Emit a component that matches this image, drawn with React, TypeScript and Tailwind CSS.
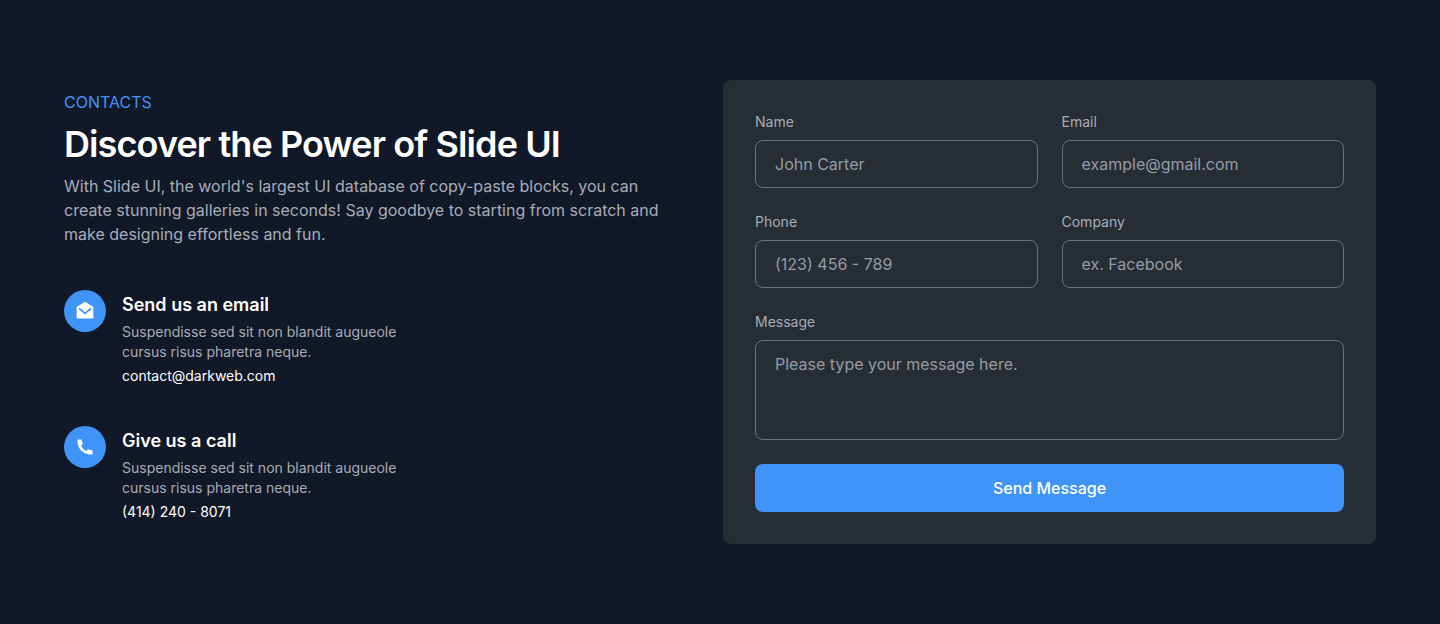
import type { ReactNode } from "react";

const fieldClass =
  "w-full rounded-lg border border-[#6b727a] bg-transparent px-[19px] text-base text-white placeholder:text-[#959ca6] placeholder:opacity-100 outline-none focus:border-[#4094f7]";

function Field({ id, label, placeholder, type = "text" }: { id: string; label: string; placeholder: string; type?: string }) {
  return (
    <div className="flex flex-col gap-2">
      <label htmlFor={id} className="text-sm leading-5 text-[#a6adb8]">{label}</label>
      <input id={id} type={type} placeholder={placeholder} className={`${fieldClass} h-12`} />
    </div>
  );
}

function ContactItem({ icon, title, href, link }: { icon: ReactNode; title: string; href: string; link: string }) {
  return (
    <div className="flex items-start gap-4">
      <div className="flex size-[42px] shrink-0 items-center justify-center rounded-full bg-[#4094f7] text-white">{icon}</div>
      <div>
        <h3 className="mb-0.5 text-lg leading-[30px] font-semibold text-white">{title}</h3>
        <p className="mb-1 max-w-72 text-sm leading-5 text-[#a6adb8]">Suspendisse sed sit non blandit augueole cursus risus pharetra neque.</p>
        <a href={href} className="block text-sm leading-5 text-white">{link}</a>
      </div>
    </div>
  );
}

const mailIcon = (
  <svg width="20" height="20" viewBox="0 0 24 24" fill="currentColor" aria-hidden="true">
    <path d="M2.243 6.854 11.490 1.310a1 1 0 0 1 1.029 0l9.238 5.545a.5.5 0 0 1 .243.429V20a1 1 0 0 1-1 1H3a1 1 0 0 1-1-1V7.283a.5.5 0 0 1 .243-.429Zm16.103 1.390-6.285 5.439-6.414-5.445-1.294 1.524 7.720 6.555 7.581-6.560-1.308-1.513Z" />
  </svg>
);

const phoneIcon = (
  <svg width="20" height="20" viewBox="0 0 24 24" fill="currentColor" aria-hidden="true">
    <path d="M21 16.420v3.536a1 1 0 0 1-.93.998c-.437.030-.794.046-1.070.046-8.837 0-16-7.163-16-16 0-.276.015-.633.046-1.070A1 1 0 0 1 4.044 3H7.580a.5.5 0 0 1 .498.450c.023.230.044.413.064.552a13.900 13.900 0 0 0 1.212 4.002.445.445 0 0 1-.149.550l-2.158 1.542a13.047 13.047 0 0 0 6.844 6.844l1.540-2.154a.462.462 0 0 1 .573-.149 13.900 13.900 0 0 0 4 1.210c.139.020.322.042.550.064a.5.5 0 0 1 .446.509Z" />
  </svg>
);

export default function App() {
  return (
    <main className="min-h-screen bg-[#111827] px-16 py-20 font-['Inter',sans-serif]">
      <section className="grid grid-cols-1 items-center gap-6 lg:grid-cols-[minmax(0,635fr)_minmax(0,653fr)]">
        <div className="pb-3">
          <p className="mb-2 text-base leading-6 text-[#4094f7]">CONTACTS</p>
          <h1 className="mb-2 text-4xl leading-11 font-semibold tracking-tight text-white">Discover the Power of Slide UI</h1>
          <p className="mb-11 max-w-[600px] text-base leading-6 text-[#a6adb8]">
            With Slide UI, the world's largest UI database of copy-paste blocks, you can create stunning galleries in seconds! Say goodbye to starting from scratch and make designing effortless and fun.
          </p>
          <div className="flex flex-col gap-10">
            <ContactItem icon={mailIcon} title="Send us an email" href="mailto:contact@darkweb.com" link="contact@darkweb.com" />
            <ContactItem icon={phoneIcon} title="Give us a call" href="tel:4142408071" link="(414) 240 - 8071" />
          </div>
        </div>
        <form className="flex flex-col gap-6 rounded-lg bg-[#262d33] p-8" onSubmit={(e) => e.preventDefault()}>
          <div className="grid grid-cols-2 gap-6">
            <Field id="name" label="Name" placeholder="John Carter" />
            <Field id="email" label="Email" type="email" placeholder="example@gmail.com" />
            <Field id="phone" label="Phone" type="tel" placeholder="(123) 456 - 789" />
            <Field id="company" label="Company" placeholder="ex. Facebook" />
          </div>
          <div className="flex flex-col gap-2">
            <label htmlFor="message" className="text-sm leading-5 text-[#a6adb8]">Message</label>
            <textarea id="message" placeholder="Please type your message here." className={`${fieldClass} block h-[100px] resize-none py-[11px] leading-6`} />
          </div>
          <button type="submit" className="h-12 rounded-lg bg-[#4094f7] text-base font-medium text-white">Send Message</button>
        </form>
      </section>
    </main>
  );
}
